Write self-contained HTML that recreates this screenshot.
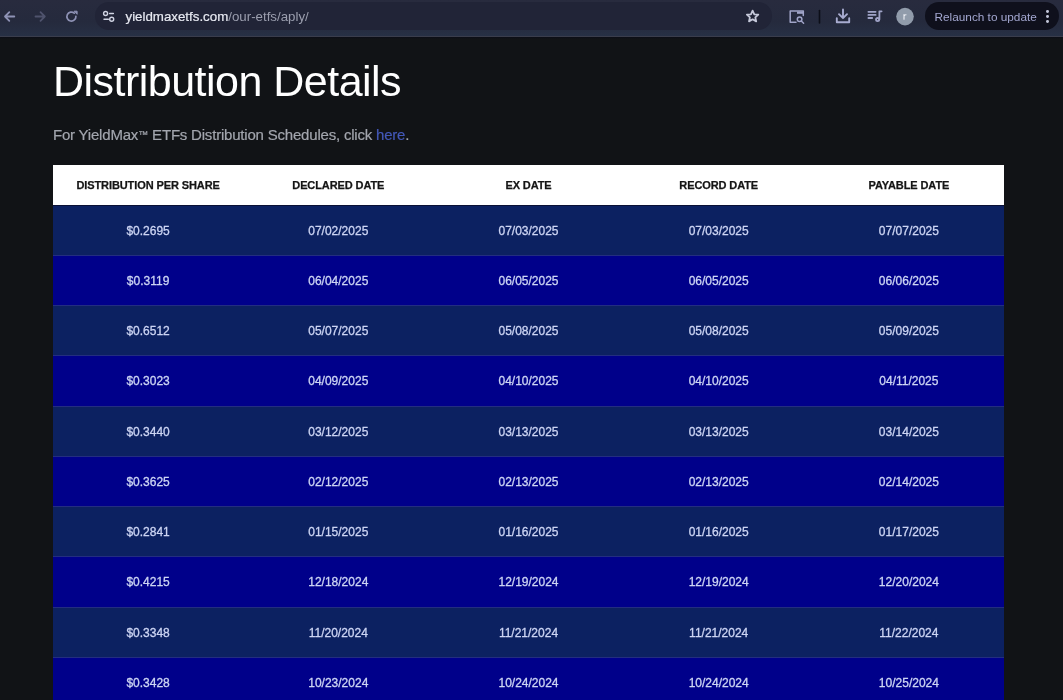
<!DOCTYPE html>
<html><head><meta charset="utf-8">
<style>
*{margin:0;padding:0;box-sizing:border-box}
.gs{will-change:transform}
html,body{width:1063px;height:700px;overflow:hidden;background:#111316;font-family:"Liberation Sans",sans-serif}
.abs{position:absolute}
.bar{position:absolute;left:0;top:0;width:1063px;height:36px;background:linear-gradient(#282b3e,#252a3d 60%,#273045)}
.barline{position:absolute;left:0;top:36px;width:1063px;height:1px;background:#3a3d4c}
.url{position:absolute;left:95px;top:2px;width:677px;height:28px;border-radius:14px;background:#212437}
.dk{position:absolute;left:0;top:37px;width:1063px;height:2px;background:linear-gradient(#0b0d17,#111316)}
.urltext{position:absolute;left:125.5px;top:9px;font-size:13.3px;line-height:16px;color:#e8eaf2;white-space:nowrap;-webkit-text-stroke:0.2px #e8eaf2}
.urltext span{color:#9b9eae;-webkit-text-stroke:0}
.relaunch{position:absolute;left:925px;top:2px;width:134px;height:28px;border-radius:14px;background:#0f101c}
.relaunch .t{position:absolute;left:9.5px;top:8px;font-size:11.8px;line-height:14px;color:#a3a7d0;white-space:nowrap}
.dot{position:absolute;width:2.8px;height:2.8px;border-radius:50%;background:#c2c5d8}
h1{position:absolute;left:53px;top:56px;font-size:43px;line-height:50px;font-weight:normal;color:#ffffff;white-space:nowrap;letter-spacing:-0.52px}
.sub{position:absolute;left:53px;top:126px;font-size:15px;line-height:18px;color:#a3a6ae;-webkit-text-stroke:0.2px #a3a6ae;white-space:nowrap;letter-spacing:-0.2px}
.tm{font-size:10px;position:relative;top:-2.5px;letter-spacing:0}
.sub a{color:#4358b8;-webkit-text-stroke:0.2px #4358b8;text-decoration:none}
.tbl{position:absolute;left:53px;top:165px;width:951px;height:535px}
.hd{position:absolute;left:0;top:0;width:951px;height:40px;background:#fff}
.hdl{position:absolute;left:0;top:40px;width:951px;height:1px;background:#0a1035}
.c{position:absolute;top:0;width:190.2px;height:100%;display:flex;align-items:center;justify-content:center;white-space:nowrap}
.hd .c{font-size:11px;font-weight:bold;color:#151515;-webkit-text-stroke:0.25px #151515;padding-top:0px;letter-spacing:-0.1px}
.row{position:absolute;left:0;width:951px}
.row .c{font-size:12px;color:#cdd5f4;-webkit-text-stroke:0.3px #cdd5f4;padding-top:1.5px}
.row.a{background:#0c2161}
.row.b{background:#00008a}
.rl{position:absolute;left:0;top:0;width:951px;height:1px;background:#232d80}
</style></head><body><div class="gs" style="position:absolute;left:0;top:0;width:1063px;height:700px">
<div class="bar"></div>
<div class="barline"></div><div class="dk"></div>
<svg class="abs" style="left:0;top:0" width="100" height="36" viewBox="0 0 100 36" fill="none" stroke-linecap="round" stroke-linejoin="round">
  <g stroke="#8e92b5" stroke-width="1.8">
    <path d="M14.3 16.5H5M9.3 12.2L5 16.5L9.3 20.8"/>
  </g>
  <g stroke="#4f536d" stroke-width="1.8">
    <path d="M35.5 16.5H44.8M40.5 12.2L44.8 16.5L40.5 20.8"/>
  </g>
  <path d="M75.9 16.3A4.5 4.5 0 1 1 74.3 13.1" stroke="#8e92b5" stroke-width="1.7"/>
  <path d="M74.5 11.2L77.1 11.2L77.1 13.9Z" fill="#8e92b5" stroke="#8e92b5" stroke-width="1"/>
</svg>
<div class="url"></div>
<svg class="abs" style="left:95px;top:0" width="30" height="36" viewBox="95 0 30 36" fill="none" stroke="#d0d3e2" stroke-width="1.4" stroke-linecap="round">
  <circle cx="105.6" cy="13.5" r="2"/>
  <path d="M109.6 13.5H113.4M104 19.2H108.4"/>
  <circle cx="111.7" cy="19.2" r="2"/>
</svg>
<div class="urltext">yieldmaxetfs.com<span>/our-etfs/aply/</span></div>
<svg class="abs" style="left:740px;top:0" width="200" height="36" viewBox="740 0 200 36" fill="none" stroke-linejoin="round" stroke-linecap="round">
  <path d="M752.6 10.6L754.3 14.3L758.3 14.7L755.3 17.4L756.2 21.4L752.6 19.3L749 21.4L749.9 17.4L746.9 14.7L750.9 14.3Z" stroke="#c6c9da" stroke-width="1.8"/>
  <g stroke="#a0a4c8" stroke-width="1.5">
    <path d="M796 22.3H790.2V11H803.3V15.5"/>
    <circle cx="799.6" cy="19.3" r="2.3"/>
    <path d="M801.3 21L803.6 23.2"/>
  </g>
  <path d="M797 11.5H803.5V13.8H797Z" fill="#a0a4c8"/>
  <path d="M819.5 10.5V23" stroke="#0c0e18" stroke-width="1.6"/>
  <g stroke="#a8acd0" stroke-width="1.9">
    <path d="M843 9.4V18M839 14.2L843 18.2L847 14.2M836.8 18.3V22.3H849.2V18.3"/>
  </g>
  <g stroke="#a0a4c8" stroke-width="1.8">
    <path d="M868.4 11.8H875.6M868.4 14.9H875.6M868.4 18H872.2"/>
    <path d="M879.4 19.3V11.3H881.6"/>
    <circle cx="877.6" cy="19.6" r="1.6"/>
  </g>
  <circle cx="905" cy="16.6" r="8.8" fill="#919cab" stroke="none"/>
  <path d="M904 19.2V14.6M904 16Q904.6 14.6 906 14.7" stroke="#eef0f6" stroke-width="1.1"/>
</svg>
<div class="relaunch"><div class="t">Relaunch to update</div>
  <div class="dot" style="left:121px;top:8.4px"></div>
  <div class="dot" style="left:121px;top:13.1px"></div>
  <div class="dot" style="left:121px;top:17.8px"></div>
</div>
<h1>Distribution Details</h1>
<div class="sub">For YieldMax<span class="tm">™</span> ETFs Distribution Schedules, click <a>here</a>.</div>
<div class="tbl">
<div class="hd"><div class="c" style="left:0.0px">DISTRIBUTION PER SHARE</div><div class="c" style="left:190.2px">DECLARED DATE</div><div class="c" style="left:380.4px">EX DATE</div><div class="c" style="left:570.6px">RECORD DATE</div><div class="c" style="left:760.8px">PAYABLE DATE</div></div>
<div class="hdl"></div>
<div class="row a" style="top:41px;height:49px"><div class="c" style="left:0.0px">$0.2695</div><div class="c" style="left:190.2px">07/02/2025</div><div class="c" style="left:380.4px">07/03/2025</div><div class="c" style="left:570.6px">07/03/2025</div><div class="c" style="left:760.8px">07/07/2025</div></div>
<div class="row b" style="top:90px;height:50px"><div class="rl"></div><div class="c" style="left:0.0px">$0.3119</div><div class="c" style="left:190.2px">06/04/2025</div><div class="c" style="left:380.4px">06/05/2025</div><div class="c" style="left:570.6px">06/05/2025</div><div class="c" style="left:760.8px">06/06/2025</div></div>
<div class="row a" style="top:140px;height:50px"><div class="rl"></div><div class="c" style="left:0.0px">$0.6512</div><div class="c" style="left:190.2px">05/07/2025</div><div class="c" style="left:380.4px">05/08/2025</div><div class="c" style="left:570.6px">05/08/2025</div><div class="c" style="left:760.8px">05/09/2025</div></div>
<div class="row b" style="top:190px;height:51px"><div class="rl"></div><div class="c" style="left:0.0px">$0.3023</div><div class="c" style="left:190.2px">04/09/2025</div><div class="c" style="left:380.4px">04/10/2025</div><div class="c" style="left:570.6px">04/10/2025</div><div class="c" style="left:760.8px">04/11/2025</div></div>
<div class="row a" style="top:241px;height:50px"><div class="rl"></div><div class="c" style="left:0.0px">$0.3440</div><div class="c" style="left:190.2px">03/12/2025</div><div class="c" style="left:380.4px">03/13/2025</div><div class="c" style="left:570.6px">03/13/2025</div><div class="c" style="left:760.8px">03/14/2025</div></div>
<div class="row b" style="top:291px;height:50px"><div class="rl"></div><div class="c" style="left:0.0px">$0.3625</div><div class="c" style="left:190.2px">02/12/2025</div><div class="c" style="left:380.4px">02/13/2025</div><div class="c" style="left:570.6px">02/13/2025</div><div class="c" style="left:760.8px">02/14/2025</div></div>
<div class="row a" style="top:341px;height:50px"><div class="rl"></div><div class="c" style="left:0.0px">$0.2841</div><div class="c" style="left:190.2px">01/15/2025</div><div class="c" style="left:380.4px">01/16/2025</div><div class="c" style="left:570.6px">01/16/2025</div><div class="c" style="left:760.8px">01/17/2025</div></div>
<div class="row b" style="top:391px;height:51px"><div class="rl"></div><div class="c" style="left:0.0px">$0.4215</div><div class="c" style="left:190.2px">12/18/2024</div><div class="c" style="left:380.4px">12/19/2024</div><div class="c" style="left:570.6px">12/19/2024</div><div class="c" style="left:760.8px">12/20/2024</div></div>
<div class="row a" style="top:442px;height:50px"><div class="rl"></div><div class="c" style="left:0.0px">$0.3348</div><div class="c" style="left:190.2px">11/20/2024</div><div class="c" style="left:380.4px">11/21/2024</div><div class="c" style="left:570.6px">11/21/2024</div><div class="c" style="left:760.8px">11/22/2024</div></div>
<div class="row b" style="top:492px;height:50px"><div class="rl"></div><div class="c" style="left:0.0px">$0.3428</div><div class="c" style="left:190.2px">10/23/2024</div><div class="c" style="left:380.4px">10/24/2024</div><div class="c" style="left:570.6px">10/24/2024</div><div class="c" style="left:760.8px">10/25/2024</div></div>
</div>
</div></body></html>
